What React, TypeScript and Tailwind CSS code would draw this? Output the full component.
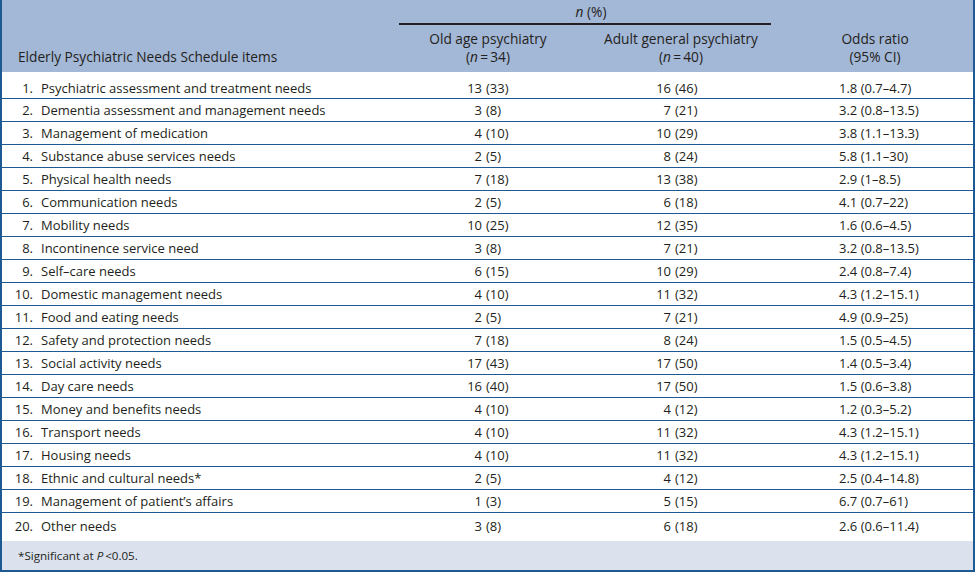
const rows: [string, string, string, string, string, string][] = [
  ['Psychiatric assessment and treatment needs', '13', '(33)', '16', '(46)', '1.8 (0.7–4.7)'],
  ['Dementia assessment and management needs', '3', '(8)', '7', '(21)', '3.2 (0.8–13.5)'],
  ['Management of medication', '4', '(10)', '10', '(29)', '3.8 (1.1–13.3)'],
  ['Substance abuse services needs', '2', '(5)', '8', '(24)', '5.8 (1.1–30)'],
  ['Physical health needs', '7', '(18)', '13', '(38)', '2.9 (1–8.5)'],
  ['Communication needs', '2', '(5)', '6', '(18)', '4.1 (0.7–22)'],
  ['Mobility needs', '10', '(25)', '12', '(35)', '1.6 (0.6–4.5)'],
  ['Incontinence service need', '3', '(8)', '7', '(21)', '3.2 (0.8–13.5)'],
  ['Self–care needs', '6', '(15)', '10', '(29)', '2.4 (0.8–7.4)'],
  ['Domestic management needs', '4', '(10)', '11', '(32)', '4.3 (1.2–15.1)'],
  ['Food and eating needs', '2', '(5)', '7', '(21)', '4.9 (0.9–25)'],
  ['Safety and protection needs', '7', '(18)', '8', '(24)', '1.5 (0.5–4.5)'],
  ['Social activity needs', '17', '(43)', '17', '(50)', '1.4 (0.5–3.4)'],
  ['Day care needs', '16', '(40)', '17', '(50)', '1.5 (0.6–3.8)'],
  ['Money and benefits needs', '4', '(10)', '4', '(12)', '1.2 (0.3–5.2)'],
  ['Transport needs', '4', '(10)', '11', '(32)', '4.3 (1.2–15.1)'],
  ['Housing needs', '4', '(10)', '11', '(32)', '4.3 (1.2–15.1)'],
  ['Ethnic and cultural needs*', '2', '(5)', '4', '(12)', '2.5 (0.4–14.8)'],
  ['Management of patient’s affairs', '1', '(3)', '5', '(15)', '6.7 (0.7–61)'],
  ['Other needs', '3', '(8)', '6', '(18)', '2.6 (0.6–11.4)'],
];

function NCount({ n }: { n: string }) {
  return (
    <span>
      (<i>n</i>
      {'\u2009=\u2009'}
      {n})
    </span>
  );
}

export default function App() {
  return (
    <div className="w-[975px] h-[572px] bg-white border-l-2 border-r-2 border-b-2 border-[#1d5a94] text-[13px] text-[#231f20] font-['Open_Sans','Liberation_Sans',Arial,sans-serif] flex flex-col">
      <header className="bg-[#a3b7d6] h-[72px] flex flex-col shrink-0 text-[13.7px]">
        <div className="flex h-[25px]">
          <div className="w-[397px]" />
          <div className="w-[372px] h-[25px] border-b-2 border-[#231f20] flex items-center justify-center pl-[12px] leading-[16px]">
            <span>
              <i>n</i> (%)
            </span>
          </div>
        </div>
        <div className="flex leading-[18px] pt-[5px]">
          <div className="w-[397px] pl-[16px] pt-[18px]">Elderly Psychiatric Needs Schedule items</div>
          <div className="w-[176px] flex flex-col items-center pl-[2px]">
            <span>Old age psychiatry</span>
            <NCount n="34" />
          </div>
          <div className="w-[196px] flex flex-col items-center pl-[16px]">
            <span>Adult general psychiatry</span>
            <NCount n="40" />
          </div>
          <div className="flex-1 flex flex-col items-center pl-[6px]">
            <span>Odds ratio</span>
            <span>(95% CI)</span>
          </div>
        </div>
      </header>
      <div className="flex flex-col">
        {rows.map((r, i) => {
          const first = i === 0;
          const last = i === rows.length - 1;
          const rowCls = first
            ? 'h-[27px] pt-[5px] items-center border-b border-[#1d5a94]'
            : last
              ? 'h-[28px] pt-[5px] items-start'
              : 'h-[23px] items-center border-b border-[#1d5a94]';
          return (
            <div key={i} className={`flex leading-[16px] ${rowCls}`}>
              <div className="w-[397px] flex">
                <span className="w-[31px] text-right">{i + 1}.</span>
                <span className="pl-[8px]">{r[0]}</span>
              </div>
              <div className="w-[176px] flex">
                <span className="w-[83px] text-right">{r[1]}</span>
                <span className="pl-[4px]">{r[2]}</span>
              </div>
              <div className="w-[196px] flex">
                <span className="w-[96px] text-right">{r[3]}</span>
                <span className="pl-[4px]">{r[4]}</span>
              </div>
              <div className="flex-1 pl-[68px]">{r[5]}</div>
            </div>
          );
        })}
      </div>
      <footer className="flex-1 bg-[#dbe2ee] flex items-center pl-[16px] text-[11.6px]">
        <span>
          *Significant at <i>P</i>
          {'\u2009<'}0.05.
        </span>
      </footer>
    </div>
  );
}
